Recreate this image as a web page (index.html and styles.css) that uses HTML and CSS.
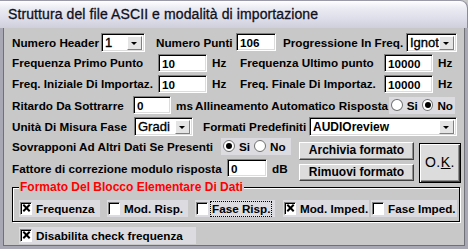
FILE: index.html
```html
<!DOCTYPE html>
<html lang="it">
<head>
    <meta charset="UTF-8">
    <title>Struttura del file ASCII</title>
    <link rel="stylesheet" href="styles.css">
</head>
<body>
    <div class="window">
        <div class="titlebar">Struttura del file ASCII e modalità di importazione</div>
        <div class="content">

            <div class="row r1">
                <span class="lbl w-header">Numero Header</span>
                <div class="combo c-header"><span class="val">1</span><span class="arrow"></span></div>
                <span class="lbl w-punti">Numero Punti</span>
                <div class="field f-punti">106</div>
                <span class="lbl w-prog">Progressione In Freq.</span>
                <div class="combo c-prog"><span class="val">Ignota</span><span class="arrow"></span></div>
            </div>

            <div class="row r2">
                <span class="lbl w-freqL">Frequenza Primo Punto</span>
                <div class="field f-freq">10</div>
                <span class="unit w-hz">Hz</span>
                <span class="lbl w-freqR">Frequenza Ultimo punto</span>
                <div class="field f-freq">10000</div>
                <span class="unit">Hz</span>
            </div>

            <div class="row r3">
                <span class="lbl w-freqL">Freq. Iniziale Di Importaz.</span>
                <div class="field f-freq">10</div>
                <span class="unit w-hz">Hz</span>
                <span class="lbl w-freqR">Freq. Finale Di Importaz.</span>
                <div class="field f-freq">10000</div>
                <span class="unit">Hz</span>
            </div>

            <div class="row r4">
                <span class="lbl w-ritardo">Ritardo Da Sottrarre</span>
                <div class="field f-ritardo">0</div>
                <span class="unit w-ms">ms</span>
                <span class="lbl w-allinea">Allineamento Automatico Risposta</span>
                <div class="radios rg-allinea">
                    <span class="radio"></span><span class="rlbl">Si</span>
                    <span class="radio on"></span><span class="rlbl">No</span>
                </div>
            </div>

            <div class="row r5">
                <span class="lbl w-unita">Unità Di Misura Fase</span>
                <div class="combo c-gradi"><span class="val">Gradi</span><span class="arrow"></span></div>
                <span class="lbl w-formati">Formati Predefiniti</span>
                <div class="combo c-formati"><span class="val">AUDIOreview</span><span class="arrow"></span></div>
            </div>

            <div class="block">
                <div class="block-left">
                    <div class="row r6">
                        <span class="lbl w-sovr">Sovrapponi Ad Altri Dati Se Presenti</span>
                        <div class="radios rg-sovr">
                            <span class="radio on"></span><span class="rlbl">Si</span>
                            <span class="radio"></span><span class="rlbl">No</span>
                        </div>
                    </div>
                    <div class="row r7">
                        <span class="lbl w-fattore">Fattore di correzione modulo risposta</span>
                        <div class="field f-fattore">0</div>
                        <span class="unit">dB</span>
                    </div>
                </div>
                <div class="block-buttons">
                    <div class="btn">Archivia formato</div>
                    <div class="btn">Rimuovi formato</div>
                </div>
                <div class="btn btn-ok">O.<u>K</u>.</div>
            </div>

            <div class="group">
                <span class="legend">Formato Del Blocco Elementare Di Dati</span>
                <div class="checks">
                    <div class="check ck-freq"><span class="box on"></span><span class="txt">Frequenza</span></div>
                    <div class="check ck-modr"><span class="box"></span><span class="txt">Mod. Risp.</span></div>
                    <div class="check ck-faser focus"><span class="box"></span><span class="txt">Fase Risp.</span></div>
                    <div class="check ck-modi"><span class="box on"></span><span class="txt">Mod. Imped.</span></div>
                    <div class="check ck-fasei"><span class="box"></span><span class="txt">Fase Imped.</span></div>
                </div>
            </div>

            <div class="check ck-disab"><span class="box on"></span><span class="txt">Disabilita check frequenza</span></div>
        </div>
    </div>
</body>
</html>
```

FILE: styles.css
```css
body{
    margin: 0;
    padding: 0;
    background: #c8c8cc;
    font-family: "Liberation Sans", Arial, sans-serif;
    font-weight: bold;
    font-size: 11.7px;
    color: #000;
}
.window{
    width: 468px;
    height: 249px;
    box-sizing: border-box;
    background: #c8c8c8;
    overflow: hidden;
}
.titlebar{
    height: 28px;
    box-sizing: border-box;
    padding: 5px 0 0 8px;
    background: linear-gradient(to bottom, #ffffff 0%, #ececf4 25%, #dedeea 65%, #cfcfdc 100%);
    border-top: 1px solid #9a9aa8;
    border-right: 1px solid #8a8a98;
    border-top-right-radius: 8px;
    font-size: 14px;
    font-weight: normal;
    letter-spacing: 0.1px;
    color: #101020;
    -webkit-text-stroke: 0.3px #101020;
}
.content{
    height: 221px;
    box-sizing: border-box;
    border-left: 3px solid #a8a8b4;
    border-right: 3px solid #a8a8b4;
    border-bottom: 3px solid #a8a8b4;
    box-shadow: inset 1px 0 0 #707078, inset -1px 0 0 #707078, inset 0 -1px 0 #707078;
    padding: 4px 0 0 9px;
}
.row{
    display: flex;
    align-items: center;
}
.lbl, .unit{
    white-space: nowrap;
    flex: none;
}

/* label widths */
.w-header{ width: 89px; }
.w-punti{ width: 80px; margin-left: 11px; }
.w-prog{ width: 123px; margin-left: 7px; }
.w-freqL{ width: 146px; }
.w-hz{ width: 28px; margin-left: 4px; }
.w-freqR{ width: 144px; }
.w-ritardo{ width: 121px; }
.w-ms{ width: 19px; margin-left: 5px; }
.w-allinea{ width: 194px; }
.w-unita{ width: 122px; }
.w-formati{ width: 106px; margin-left: 10px; }
.w-sovr{ width: 209px; }
.w-fattore{ width: 215px; }

.unit{ margin-left: 5px; }

/* sunken fields */
.field, .combo{
    background: #fff;
    height: 18px;
    box-sizing: border-box;
    border-top: 1px solid #808080;
    border-left: 1px solid #808080;
    border-right: 1px solid #fff;
    border-bottom: 1px solid #fff;
    box-shadow: inset 1px 1px 0 #000, inset -1px -1px 0 #dcdcdc;
    padding: 1px 0 0 3px;
    line-height: 15px;
    flex: none;
}
.f-punti{ width: 40px; }
.f-freq{ width: 49px; }
.f-ritardo{ width: 38px; }
.f-fattore{ width: 40px; }

.combo{
    display: flex;
    padding-right: 2px;
    padding-top: 2px;
    height: 19px;
}
.combo .val{
    flex: 1;
    overflow: hidden;
    white-space: nowrap;
    font-size: 13px;
    font-weight: normal;
    line-height: 14px;
    -webkit-text-stroke: 0.35px #000;
}
.c-header{ width: 44px; }
.c-prog{ width: 51px; }
.c-gradi{ width: 59px; }
.c-formati{ width: 148px; }
.c-formati .val{ font-weight: bold; -webkit-text-stroke: 0; font-size: 12px; }

.arrow{
    width: 15px;
    height: 14px;
    box-sizing: border-box;
    background: #e4e4e4;
    border-top: 1px solid #fff;
    border-left: 1px solid #fff;
    border-right: 1px solid #808080;
    border-bottom: 1px solid #808080;
    position: relative;
    flex: none;
}
.arrow::after{
    content: "";
    position: absolute;
    left: 3px;
    top: 5px;
    border-left: 3px solid transparent;
    border-right: 3px solid transparent;
    border-top: 3px solid #000;
}

/* rows */
.r1{ height: 20px; }
.r2, .r3{ height: 21px; }
.r4{ height: 22px; }
.r5{ height: 21px; }

/* radios */
.radios{
    display: flex;
    align-items: center;
    background: #dcdce0;
    height: 17px;
    box-sizing: border-box;
    padding: 0 2px;
    flex: none;
}
.radio{
    width: 12px;
    height: 12px;
    box-sizing: border-box;
    border-radius: 50%;
    background: #fff;
    border: 1px solid #707070;
    position: relative;
    margin-right: 4px;
}
.radio.on::after{
    content: "";
    position: absolute;
    left: 2px;
    top: 2px;
    width: 6px;
    height: 6px;
    border-radius: 50%;
    background: #000;
}
.rlbl{ margin-right: 4px; }
.rlbl:last-child{ margin-right: 0; }
.rg-allinea{ width: 66px; }
.rg-sovr{ width: 70px; }

/* block with buttons */
.block{
    display: flex;
    height: 44px;
}
.block-left{
    width: 287px;
    flex: none;
}
.r6{ height: 18px; }
.r7{ height: 26px; }
.block-buttons{
    display: flex;
    flex-direction: column;
    gap: 4px;
    padding-top: 5px;
}
.btn{
    width: 115px;
    height: 18px;
    box-sizing: border-box;
    background: #dcdcdc;
    border-top: 1px solid #fff;
    border-left: 1px solid #fff;
    border-right: 1px solid #404040;
    border-bottom: 1px solid #404040;
    box-shadow: inset -1px -1px 0 #909090;
    text-align: center;
    line-height: 15px;
    font-size: 12px;
}
.btn-ok{
    width: 42px;
    height: 40px;
    margin-left: 5px;
    margin-top: 6px;
    border: 1px solid #000;
    box-shadow: inset 1px 1px 0 #fff, inset -1px -1px 0 #404040, inset -2px -2px 0 #909090;
    font-weight: normal;
    font-size: 14px;
    line-height: 37px;
    letter-spacing: 0.5px;
}

/* group box */
.group{
    position: relative;
    margin-top: 6px;
    width: 448px;
    height: 35px;
    box-sizing: border-box;
    border: 1px solid #000;
    box-shadow: 1px 1px 0 #fff, inset 1px 1px 0 #fff;
    padding: 12px 0 0 6px;
}
.legend{
    position: absolute;
    left: 6px;
    top: -8px;
    padding: 0 1px;
    background: #c8c8c8;
    color: #ff0000;
    font-size: 12px;
    line-height: 14px;
}
.checks{
    display: flex;
    align-items: center;
}
.check{
    display: flex;
    align-items: center;
    height: 17px;
    background: #dcdce0;
    white-space: nowrap;
    box-sizing: border-box;
    padding-left: 1px;
    flex: none;
}
.box{
    width: 12px;
    height: 13px;
    box-sizing: border-box;
    background: #fff;
    border-top: 1px solid #808080;
    border-left: 1px solid #808080;
    border-right: 1px solid #fff;
    border-bottom: 1px solid #fff;
    box-shadow: inset 1px 1px 0 #000;
    margin-right: 3px;
    position: relative;
    flex: none;
}
.box.on::before, .box.on::after{
    content: "";
    position: absolute;
    left: 1px;
    top: 4px;
    width: 9px;
    height: 2px;
    background: #000;
}
.box.on::before{ transform: rotate(45deg); }
.box.on::after{ transform: rotate(-45deg); }
.txt{ padding: 0 1px; line-height: 14px; }
.ck-freq{ width: 81px; }
.ck-modr{ width: 81px; margin-left: 7px; }
.ck-faser{ width: 80px; margin-left: 7px; }
.ck-faser.focus .txt{ outline: 1px dotted #000; }
.ck-modi{ width: 86px; margin-left: 8px; }
.ck-fasei{ width: 86px; margin-left: 2px; }
.ck-disab{
    width: 177px;
    margin: 5px 0 0 7px;
}
```
